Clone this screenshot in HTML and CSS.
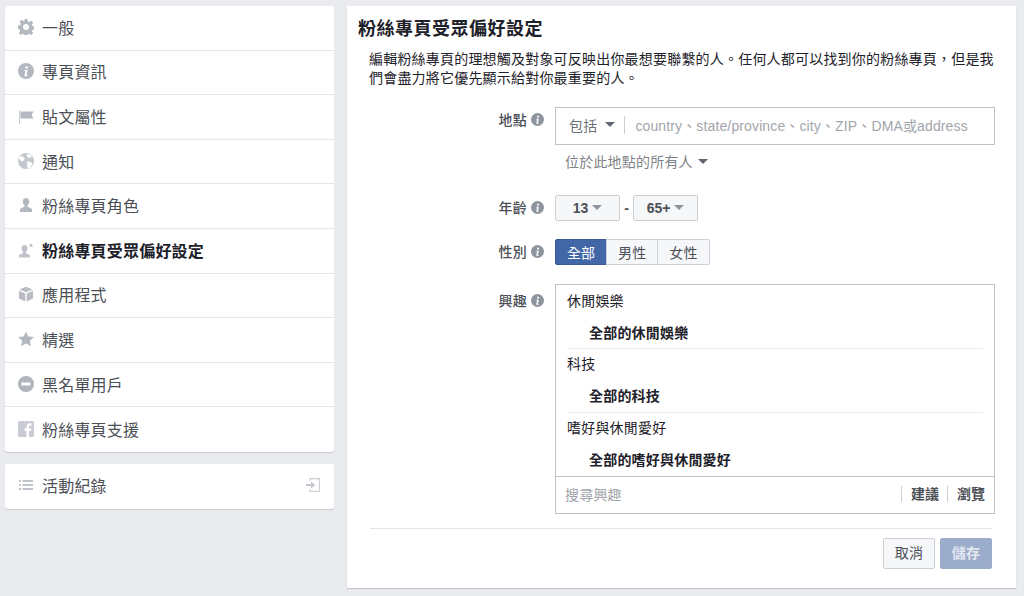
FILE: index.html
```html
<!DOCTYPE html>
<html lang="zh-Hant">
<head>
<meta charset="utf-8">
<title>粉絲專頁受眾偏好設定</title>
<link rel="stylesheet" href="styles.css">
</head>
<body>
<svg class="defs" width="0" height="0">
  <defs>
    <symbol id="info" viewBox="0 0 16 16"><circle cx="8" cy="8" r="8" fill="currentColor"/><path d="M8.6 3.2a1.3 1.3 0 1 1-.01 2.6 1.3 1.3 0 0 1 .01-2.6zM6.6 7h3l-1 5.2h1v1H6.4l1-5.2h-1z" fill="#fff"/></symbol>
  </defs>
</svg>
<div class="page">
  <aside class="side">
    <nav class="card">
      <a class="item"><svg class="ico" viewBox="0 0 16 16"><path fill="#b4b8c0" fill-rule="evenodd" d="M6.6 0h2.8l.4 2.2 1.5.7 1.9-1.2 2 2-1.3 1.9.6 1.5 2.2.4v2.8l-2.2.4-.6 1.5 1.3 1.9-2 2-1.9-1.3-1.5.6-.4 2.2H6.6l-.4-2.2-1.5-.6-1.9 1.3-2-2 1.3-1.9-.6-1.5L0 9.4V6.6l2.2-.4.6-1.5L1.500 2.700l2-2 1.900 1.200 1.500-.7zM8 5a3 3 0 1 0 0 6 3 3 0 0 0 0-6z"/></svg><span>一般</span></a>
      <a class="item"><svg class="ico grey"><use href="#info"/></svg><span>專頁資訊</span></a>
      <a class="item"><svg class="ico" viewBox="0 0 16 16"><path fill="#c6c9cf" d="M1 2h1v14H1z"/><path fill="#b4b8c0" d="M2.500 3.500h13l-2 3.500 2 3.500h-13z"/></svg><span>貼文屬性</span></a>
      <a class="item"><svg class="ico" viewBox="0 0 16 16"><circle cx="8" cy="8" r="8" fill="#c4c7cd"/><path fill="#fff" d="M2 3.500c2-.5 4 .5 4.500 2S5 8.500 3.500 8 1 6 .8 5zM9 1c2 0 4 .8 5 2l-2 2-3-1zM9 8.500l4 .5 1.500 2-2.500 4-2 .5-1-3z"/></svg><span>通知</span></a>
      <a class="item"><svg class="ico" viewBox="0 0 16 16"><path fill="#b4b8c0" d="M8 1c2 0 3.200 1.300 3.200 3.500 0 2-1 3.200-1.700 3.700v1.300L14 12v3H2v-3l4.500-2.500V8.200C5.800 7.700 4.800 6.500 4.800 4.500 4.800 2.300 6 1 8 1z"/></svg><span>粉絲專頁角色</span></a>
      <a class="item strong"><svg class="ico" viewBox="0 0 16 16"><path fill="#c0c3ca" d="M6.500 3c1.800 0 3 1.300 3 3.300 0 1.800-.9 3-1.600 3.500v1.200L12 13v2.500H1V13l4.100-2V9.800C4.400 9.300 3.500 8.100 3.500 6.300 3.500 4.300 4.700 3 6.500 3z"/><path fill="#c0c3ca" d="M13 1l.7 1.500 1.600.2-1.200 1.100.3 1.600-1.400-.8-1.400.8.300-1.600-1.200-1.100 1.600-.2z"/></svg><span>粉絲專頁受眾偏好設定</span></a>
      <a class="item"><svg class="ico" viewBox="0 0 16 16"><path fill="#b9bcc3" d="M8 .8l6.500 2.700L8 6.200 1.500 3.500zM1 4.700l6.300 2.700V15.500L1 12.500zM15 4.700v7.800l-6.300 3V7.400z"/></svg><span>應用程式</span></a>
      <a class="item"><svg class="ico" viewBox="0 0 16 16"><path fill="#b4b8c0" d="M8 .5l2.300 5 5.700.6-4.200 3.700 1.200 5.500L8 12.500l-5 2.800 1.200-5.500L0 6.100l5.700-.6z"/></svg><span>精選</span></a>
      <a class="item"><svg class="ico" viewBox="0 0 16 16"><path fill="#b0b4bb" fill-rule="evenodd" d="M8 0a8 8 0 1 1 0 16A8 8 0 0 1 8 0zM3.500 6.500v3h9v-3z"/></svg><span>黑名單用戶</span></a>
      <a class="item"><svg class="ico" viewBox="0 0 16 16"><rect width="16" height="16" rx="1.500" fill="#c9ccd2"/><path fill="#fff" d="M11 16v-6h2l.4-2.500H11V6c0-.8.3-1.200 1.200-1.200h1.300V2.500C13 2.400 12.300 2.300 11.600 2.300 9.700 2.300 8.500 3.500 8.500 5.600v1.900h-2V10h2v6z"/></svg><span>粉絲專頁支援</span></a>
    </nav>
    <nav class="card">
      <a class="item"><svg class="ico" viewBox="0 0 16 16"><path fill="#c0c3ca" d="M1 3h2v2H1zM4.500 3H15v2H4.500zM1 7h2v2H1zM4.500 7H15v2H4.500zM1 11h2v2H1zM4.500 11H15v2H4.500z"/></svg><span>活動紀錄</span><svg class="exit" viewBox="0 0 16 16"><path fill="none" stroke="#cdd0d5" stroke-width="1.200" d="M5 4V1.600h9.400v12.800H5V12"/><path fill="#c4c7cd" d="M1 7h5V4.500L10.500 8 6 11.500V9H1z"/></svg></a>
    </nav>
  </aside>
  <main class="main">
    <h1 class="title">粉絲專頁受眾偏好設定</h1>
    <p class="intro">編輯粉絲專頁的理想觸及對象可反映出你最想要聯繫的人。任何人都可以找到你的粉絲專頁&#xFF0C;但是我<br>們會盡力將它優先顯示給對你最重要的人。</p>
    <div class="form">
      <div class="label loc-label">地點<svg class="tip"><use href="#info"/></svg></div>
      <div class="field">
        <div class="locbox"><span class="inc">包括<i class="caret dark"></i></span><span class="ph">country、state/province、city、ZIP、DMA或address</span></div>
        <div class="locsub">位於此地點的所有人<i class="caret dark"></i></div>
      </div>
      <div class="label age-label">年齡<svg class="tip"><use href="#info"/></svg></div>
      <div class="field ages">
        <button class="btn age first">13<i class="caret"></i></button><span class="dash">-</span><button class="btn age">65+<i class="caret"></i></button>
      </div>
      <div class="label gen-label">性別<svg class="tip"><use href="#info"/></svg></div>
      <div class="field seg">
        <button class="btn on">全部</button><button class="btn">男性</button><button class="btn">女性</button>
      </div>
      <div class="label int-label">興趣<svg class="tip"><use href="#info"/></svg></div>
      <div class="field intbox">
        <div class="intlist">
          <div class="group"><div class="ghead">休閒娛樂</div><div class="gsub">全部的休閒娛樂</div></div>
          <div class="group"><div class="ghead">科技</div><div class="gsub">全部的科技</div></div>
          <div class="group"><div class="ghead">嗜好與休閒愛好</div><div class="gsub">全部的嗜好與休閒愛好</div></div>
        </div>
        <div class="search"><span class="sph">搜尋興趣</span><span class="links"><b>建議</b><b>瀏覽</b></span></div>
      </div>
    </div>
    <div class="foot"><button class="btn cancel">取消</button><button class="btn save">儲存</button></div>
  </main>
</div>
</body>
</html>
```
FILE: styles.css
```css
* { box-sizing: border-box; }
html, body { margin: 0; height: 100%; }
body {
  background: #e9ebee;
  color: #1d2129;
  font-family: "Helvetica Neue", "Liberation Sans", "Noto Sans CJK TC", sans-serif;
  overflow: hidden;
}
.defs { position: absolute; }
.page { display: flex; gap: 13px; padding: 6px 8px 0 5px; height: 596px; align-items: flex-start; }
.side { width: 329px; flex: none; display: flex; flex-direction: column; gap: 12px; }
.card {
  background: #fff;
  border-radius: 3px;
  box-shadow: 0 1px 1px rgba(0,0,0,.14);
  display: flex;
  flex-direction: column;
}
.item {
  height: 44.6px;
  display: flex;
  align-items: center;
  padding: 0 0 2px 12px;
  gap: 7px;
  border-bottom: 1px solid #e4e6ea;
  font-size: 16px;
  letter-spacing: .2px;
  color: #4b4f56;
}
.item:last-child { border-bottom: 0; }
.item.strong { color: #1d2129; font-weight: 700; }
.ico { width: 16px; height: 16px; margin: 0 1px; flex: none; }
.grey { color: #b4b8c0; }
.exit { width: 16px; height: 16px; margin-left: auto; margin-right: 13px; }
.main {
  width: 669px;
  height: 582px;
  flex: none;
  background: #fff;
  box-shadow: 0 1px 1px rgba(0,0,0,.14);
  padding: 11px 24px 0 11px;
  display: flex;
  flex-direction: column;
}
.title { margin: 0; font-size: 18px; line-height: 24px; font-weight: 700; letter-spacing: .5px; color: #1d2129; }
.intro { margin: 9px 0 0 11px; font-size: 14px; line-height: 19px; letter-spacing: .2px; color: #1d2129; white-space: nowrap; }
.form {
  display: grid;
  grid-template-columns: 186px 440px;
  column-gap: 11px;
  margin: 19px 0 0 0;
}
.label {
  display: flex;
  justify-content: flex-end;
  align-items: center;
  gap: 4px;
  height: 24px;
  font-size: 14px;
  color: #4b4f56;
  font-weight: 500;
  letter-spacing: .2px;
}
.tip { width: 13px; height: 13px; color: #8d949e; flex: none; }
.field { min-width: 0; }
.locbox {
  height: 38px;
  border: 1px solid #bdc1c9;
  display: flex;
  align-items: center;
  padding: 0 0 3px 13px;
  font-size: 14px;
  color: #4b4f56;
}
.inc { display: flex; align-items: center; padding-right: 9px; height: 18px; border-right: 1px solid #ccd0d5; letter-spacing: .2px; color: #6b6f76; }
.inc .caret { margin-left: 8px; }
.ph { margin-left: 10px; color: #a1a5ab; white-space: nowrap; letter-spacing: .13px; }
.caret {
  display: inline-block;
  width: 0; height: 0;
  border-left: 5px solid transparent;
  border-right: 5px solid transparent;
  border-top: 5px solid #90949c;
}
.caret.dark { border-top-color: #606770; }
.locsub { margin: 6px 0 0 10px; height: 20px; display: flex; align-items: center; font-size: 14px; color: #7f8389; letter-spacing: .2px; }
.locsub .caret { margin-left: 5px; }
.age-label { margin-top: 24px; }
.ages { margin-top: 24px; display: flex; align-items: center; height: 26px; }
.btn {
  font: inherit;
  font-size: 13px;
  font-weight: 700;
  height: 26px;
  padding: 0 0 1px;
  border: 1px solid #ccd0d5;
  border-radius: 2px;
  background: #f6f7f9;
  color: #4b4f56;
  display: inline-flex;
  align-items: center;
  justify-content: center;
}
.age { width: 65px; font-size: 14px; gap: 4px; }
.dash { width: 13px; text-align: center; font-size: 14px; font-weight: 700; color: #4b4f56; }
.gen-label { margin-top: 18px; }
.seg { margin-top: 18px; display: flex; height: 26px; }
.seg .btn { width: 52.2px; border-radius: 0; margin-left: -1px; font-weight: 400; font-size: 14px; letter-spacing: .2px; }
.seg .btn:first-child { margin-left: 0; border-radius: 2px 0 0 2px; }
.seg .btn:last-child { border-radius: 0 2px 2px 0; }
.seg .on { background: #4267a6; border-color: #3b5998; color: #fff; }
.int-label { margin-top: 23px; }
.intbox { margin-top: 19px; height: 230px; border: 1px solid #bdc1c9; display: flex; flex-direction: column; }
.intlist { flex: 1; padding: 1px 11px 0; overflow: hidden; }
.group { border-bottom: 1px solid #e9ebee; height: 63.300px; }
.group:last-child { border-bottom: 0; }
.ghead { height: 31px; line-height: 31px; font-size: 14px; letter-spacing: .2px; color: #1d2129; }
.gsub { padding-left: 22px; height: 32px; line-height: 32px; font-size: 14px; letter-spacing: .2px; font-weight: 700; color: #1d2129; }
.search { height: 37px; flex: none; border-top: 1px solid #bdc1c9; display: flex; align-items: center; justify-content: space-between; padding: 0 9px 3px; font-size: 14px; }
.sph { color: #a1a5ab; letter-spacing: .2px; }
.links { display: flex; }
.links b { font-weight: 700; color: #4b4f56; padding-left: 9px; margin-left: 8px; border-left: 1px solid #ccd0d5; line-height: 16px; }
.foot {
  margin: 14px 0 0 12px;
  padding-top: 9px;
  border-top: 1px solid #e4e6ea;
  display: flex;
  justify-content: flex-end;
  gap: 5px;
}
.cancel, .save { width: 52px; height: 31px; padding-bottom: 3px; font-size: 14px; font-weight: 400; letter-spacing: .2px; }
.save { background: #9cadcb; border-color: #9cadcb; color: #e4e8f1; font-weight: 700; }
```
